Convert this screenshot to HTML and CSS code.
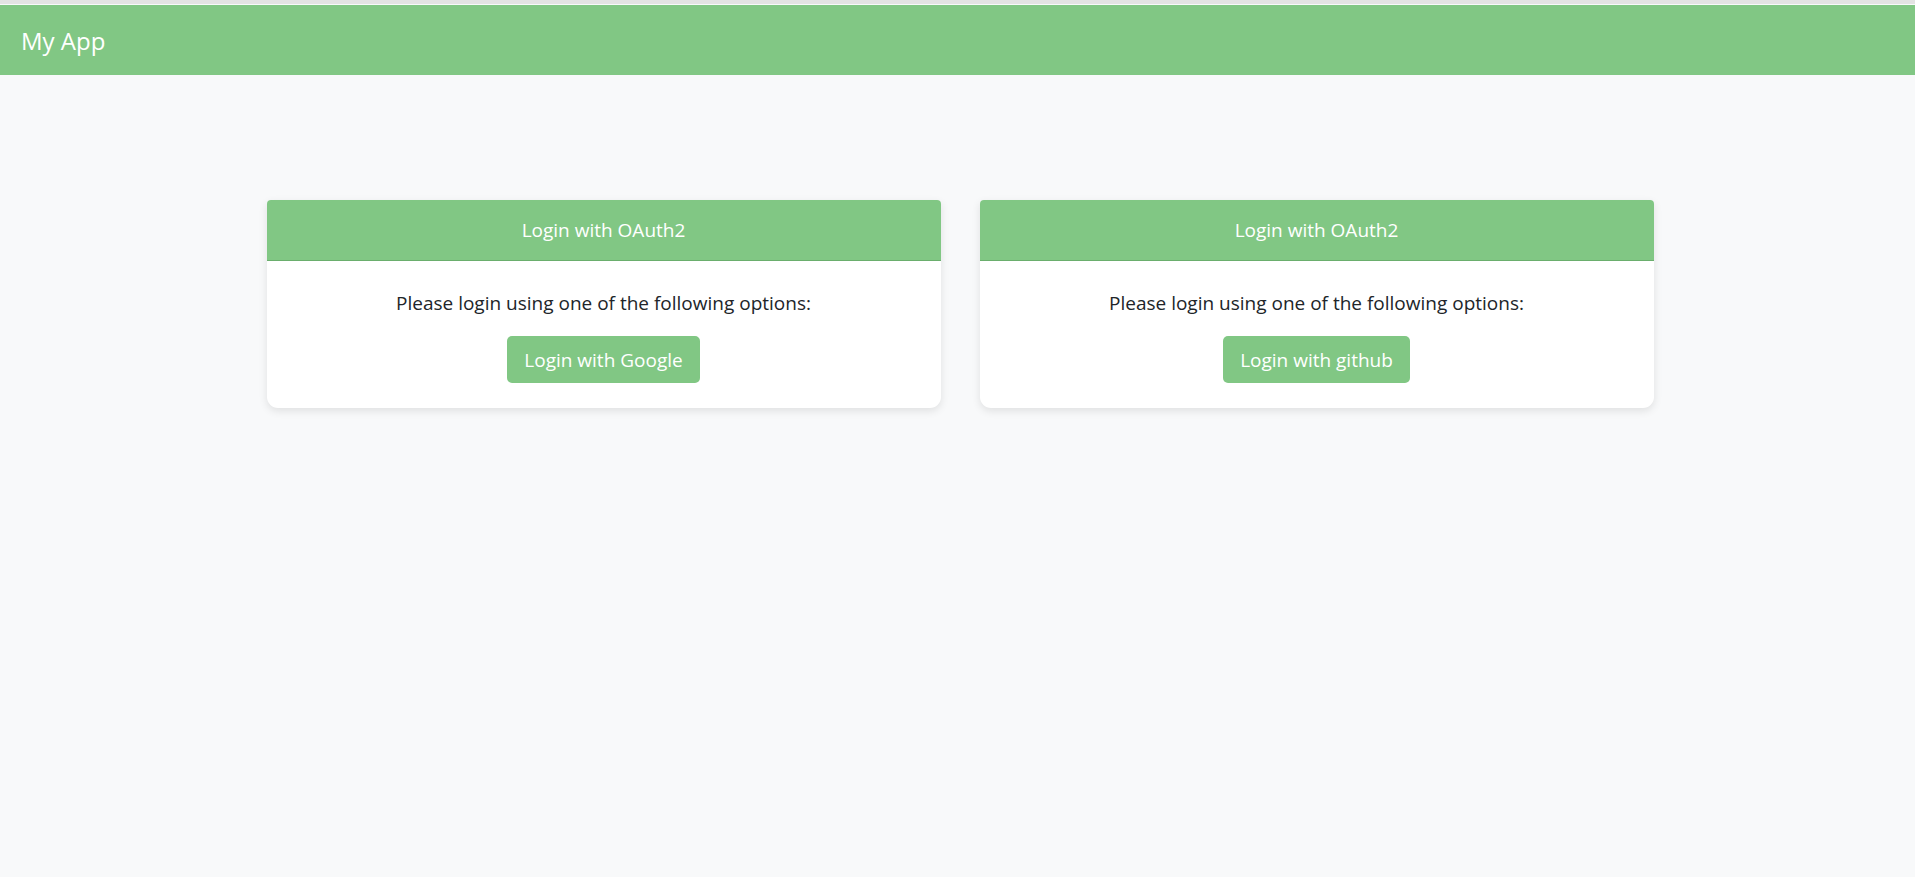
FILE: index.html
```html
<!DOCTYPE html>
<html lang="en">
<head>
<meta charset="utf-8">
<title>My App</title>
<link rel="stylesheet" href="styles.css">
</head>
<body>
<header class="topbar">
  <span class="brand">My App</span>
</header>
<main class="content">
  <section class="card">
    <div class="card-header">Login with OAuth2</div>
    <div class="card-body">
      <p class="card-text">Please login using one of the following options:</p>
      <a class="btn" href="#">Login with Google</a>
    </div>
  </section>
  <section class="card">
    <div class="card-header">Login with OAuth2</div>
    <div class="card-body">
      <p class="card-text">Please login using one of the following options:</p>
      <a class="btn" href="#">Login with github</a>
    </div>
  </section>
</main>
</body>
</html>
```
FILE: styles.css
```css
html, body {
  margin: 0;
  padding: 0;
}
body {
  background: #f8f9fa;
  font-family: "Open Sans", "Noto Sans", sans-serif;
  color: #212529;
  min-height: 877px;
  border-top: 4px solid #e3e3e3;
  box-sizing: border-box;
}
.topbar {
  background: #81c784;
  height: 70px;
  margin-top: 1px;
  display: flex;
  align-items: center;
  padding-left: 21px;
}
.brand {
  color: #fff;
  font-size: 24px;
}
.content {
  display: flex;
  justify-content: center;
  gap: 39px;
  padding-top: 125px;
  padding-left: 5px;
}
.card {
  width: 674px;
  background: #fff;
  border-radius: 4px 4px 11px 11px;
  box-shadow: 0 3px 8px rgba(0, 0, 0, 0.1);
  text-align: center;
}
.card-header {
  background: #81c784;
  color: #fff;
  font-size: 19px;
  line-height: 27px;
  padding: 17px 16px 16px;
  border-bottom: 1px solid #6aae6d;
  border-radius: 4px 4px 0 0;
}
.card-body {
  padding: 28px 16px 25px;
}
.card-text {
  margin: 0 0 19px;
  font-size: 19px;
  line-height: 28px;
}
.btn {
  display: inline-block;
  background: #81c784;
  color: #fff;
  text-decoration: none;
  font-size: 19px;
  line-height: 26px;
  padding: 11px 17px 10px;
  border-radius: 5px;
}
```
